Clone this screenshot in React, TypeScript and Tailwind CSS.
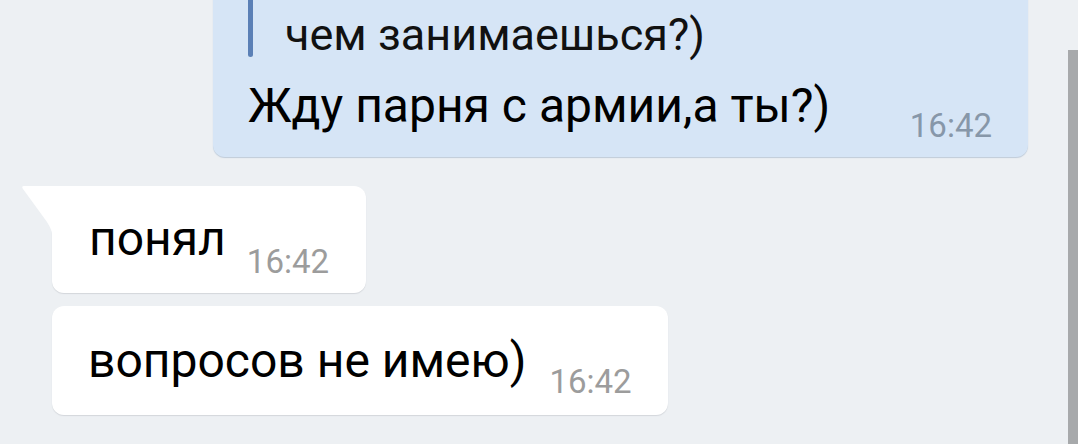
import React from "react";

export default function App() {
  return (
    <div
      className="w-[1078px] h-[444px] overflow-hidden bg-[#edf0f3] relative"
      style={{ fontFamily: "Roboto, 'Noto Sans', sans-serif" }}
    >
      <div className="pl-[213px]">
        <div className="w-[815px] mt-[-30px] bg-[#d6e5f6] rounded-[12px] shadow-[0_1px_1px_#bfcbd9] pl-[35px] pr-[36px] pb-[25px]">
          <div className="flex">
            <div className="w-[5px] rounded-full bg-[#5b80b6]" />
            <div className="pl-[32px] pt-[42px] text-[45px] leading-[45px] text-[#111]">
              чем занимаешься?)
            </div>
          </div>
          <div className="flex items-end justify-between mt-[23px]">
            <div className="text-[48px] leading-[52px] text-black">
              Жду парня с армии,а ты?)
            </div>
            <div className="text-[33px] leading-[33px] text-[#8797a9] mb-[-10px]">
              16:42
            </div>
          </div>
        </div>
      </div>

      <div className="pl-[52px] mt-[29px] flex flex-col items-start gap-[13px]">
        <div className="relative">
          <svg
            className="absolute left-[-31px] top-0"
            width="34"
            height="48"
            viewBox="0 0 34 48"
          >
            <path
              d="M34 0 L3 0 Q0 0 2 3 L26 36 Q31 44 31 48 L34 48 Z"
              fill="#ffffff"
            />
          </svg>
          <div className="bg-white rounded-[12px] rounded-tl-none shadow-[0_1px_1px_#d3d6db] h-[107px] pl-[37px] pr-[37px] pt-[27px] flex items-start gap-[21px]">
            <div className="text-[48px] leading-[52px] text-black">понял</div>
            <div className="text-[33px] leading-[33px] text-[#9c9c9c] mt-[32px]">
              16:42
            </div>
          </div>
        </div>
        <div className="bg-white rounded-[12px] shadow-[0_1px_1px_#d3d6db] h-[109px] pl-[36px] pr-[36px] pt-[29px] flex items-start gap-[23px]">
          <div className="text-[48px] leading-[52px] text-black">
            вопросов не имею)
          </div>
          <div className="text-[33px] leading-[33px] text-[#9c9c9c] mt-[30px]">
            16:42
          </div>
        </div>
      </div>

      <div className="absolute right-0 top-[50px] bottom-0 w-[10px] bg-[#a7a9ab]" />
    </div>
  );
}
